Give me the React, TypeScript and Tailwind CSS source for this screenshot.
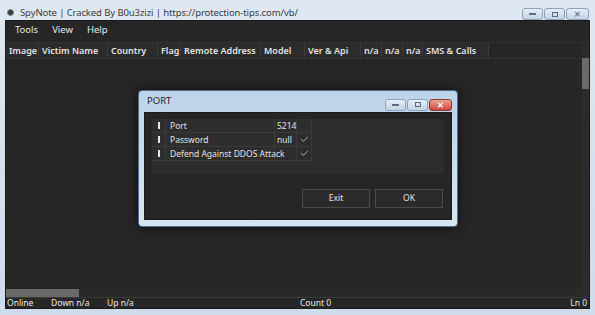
import { Check } from "lucide-react";

const cols = [
  { label: "Image", w: "w-[33px]" },
  { label: "Victim Name", w: "w-[69px]" },
  { label: "Country", w: "w-[50px]" },
  { label: "Flag", w: "w-[23px]" },
  { label: "Remote Address", w: "w-[80px]" },
  { label: "Model", w: "w-[44px]" },
  { label: "Ver & Api", w: "w-[56px]" },
  { label: "n/a", w: "w-[21px]" },
  { label: "n/a", w: "w-[21px]" },
  { label: "n/a", w: "w-[20px]" },
  { label: "SMS & Calls", w: "w-[66px]" },
];

const rows = [
  { name: "Port", value: "5214", checked: false },
  { name: "Password", value: "null", checked: true },
  { name: "Defend Against DDOS Attack", value: "", checked: true },
];

function CaptionButtons({ active }: { active?: boolean }) {
  return (
    <div className="flex gap-[1px]">
      <div className="w-[21px] h-[12px] rounded-[3px] border border-[#8ea3bb] bg-gradient-to-b from-[#e6eef7] to-[#c4d3e3] flex items-center justify-center">
        <div className="w-[7px] h-[2px] bg-[#5b6c80]" />
      </div>
      <div className="w-[21px] h-[12px] rounded-[3px] border border-[#8ea3bb] bg-gradient-to-b from-[#e6eef7] to-[#c4d3e3] flex items-center justify-center">
        <div className="w-[6px] h-[5px] border border-[#5b6c80]" />
      </div>
      <div
        className={`w-[23px] h-[12px] rounded-[3px] border flex items-center justify-center text-[8px] font-bold leading-none ${
          active
            ? "border-[#8c3a2e] bg-gradient-to-b from-[#e8a393] to-[#c8473a] text-white"
            : "border-[#8ea3bb] bg-gradient-to-b from-[#e6eef7] to-[#c4d3e3] text-[#6b7c90]"
        }`}
      >
        ✕
      </div>
    </div>
  );
}

export default function App() {
  return (
    <div
      className="relative w-[595px] h-[315px] overflow-hidden bg-gradient-to-b from-[#dfe8f2] to-[#cddbeb] flex flex-col text-[#e2e2e2] select-none"
      style={{ fontFamily: '"Noto Sans", "Open Sans", sans-serif' }}
    >
      {/* title bar */}
      <div className="h-[20px] flex items-start pt-[6px] pl-[7px] pr-[6px] shrink-0">
        <div className="w-[7px] h-[7px] mt-[3px] rounded-full bg-[#3a3a3a] border border-[#888]" />
        <span className="ml-[6px] text-[9.5px] leading-[13px] text-[#3c3c3c] tracking-[-0.1px]">
          SpyNote | Cracked By B0u3zizi | https://protection-tips.com/vb/
        </span>
        <div className="ml-auto mt-[2px]">
          <CaptionButtons />
        </div>
      </div>

      {/* client */}
      <div className="flex-1 mx-[5px] mb-[6px] bg-[#262626] flex flex-col border border-[#1a1a1a]">
        {/* menu */}
        <div className="h-[21px] flex items-center gap-[14px] pl-[9px] pb-[3px] text-[9.5px] text-[#e6e6e6] shrink-0">
          <span>Tools</span>
          <span>View</span>
          <span>Help</span>
        </div>

        {/* list */}
        <div className="flex-1 flex border-t border-[#303030]">
          <div className="flex-1 flex flex-col">
            <div className="h-[16px] flex border-b border-[#333] shrink-0">
              <div className="flex bg-[#2c2c2c]">
                {cols.map((c, i) => (
                  <div
                    key={i}
                    className={`${c.w} border-r border-[#3b3b3b] pl-[3px] text-[9px] font-semibold leading-[16px] whitespace-nowrap overflow-hidden`}
                  >
                    {c.label}
                  </div>
                ))}
              </div>
            </div>
            <div className="flex-1" />
            <div className="h-[8px] bg-[#2a2a2a] flex">
              <div className="w-[73px] bg-[#6a6a6a]" />
            </div>
          </div>
          <div className="w-[7px] bg-[#2b2b2b] flex flex-col pt-[15px]">
            <div className="h-[31px] bg-[#6a6a6a]" />
          </div>
        </div>

        {/* status */}
        <div className="h-[11px] flex items-center text-[8.5px] leading-none border-t border-[#3a3a3a] px-[1px] shrink-0 text-[#e8e8e8]">
          <span className="w-[44px]">Online</span>
          <span className="w-[56px]">Down n/a</span>
          <span className="w-[193px]">Up n/a</span>
          <span>Count 0</span>
          <span className="ml-auto pr-[1px]">Ln 0</span>
        </div>
      </div>

      {/* PORT dialog */}
      <div className="absolute left-[138px] top-[90px] w-[320px] h-[137px] rounded-[4px] border border-[#4f6f8f] bg-gradient-to-b from-[#bcd3ea] to-[#d8e6f4] shadow-[0_0_10px_rgba(0,0,0,0.7)] flex flex-col px-[5px] pb-[6px]">
        <div className="h-[21px] flex items-center shrink-0">
          <span className="ml-[3px] text-[9.5px] text-[#1e1e1e]">PORT</span>
          <div className="ml-auto mt-[6px]">
            <CaptionButtons active />
          </div>
        </div>
        <div className="flex-1 bg-[#262626] border border-[#1a1a1a] flex flex-col pt-[6px] px-[7px]">
          <div className="h-[55px] bg-[#2d2d2d] flex flex-col">
            {rows.map((r, i) => (
              <div key={i} className="flex h-[14px] text-[8.5px] leading-[14px]">
                <div className="w-[14px] border-r border-b border-[#3a3a3a] flex items-center justify-center">
                  <div className="w-[2px] h-[7px] bg-[#e6e6e6]" />
                </div>
                <div className="w-[109px] border-r border-b border-[#3a3a3a] pl-[4px] whitespace-nowrap">
                  {r.name}
                </div>
                <div className="w-[22px] border-r border-b border-[#3a3a3a] pl-[2px]">{r.value}</div>
                <div className="w-[15px] border-r border-b border-[#3a3a3a] flex items-center justify-center">
                  {r.checked && <Check className="w-[9px] h-[9px] text-[#d8d8d8]" strokeWidth={2} />}
                </div>
              </div>
            ))}
          </div>
          <div className="flex justify-end gap-[5px] mt-[15px] pr-[1px]">
            <button className="w-[68px] h-[19px] bg-[#2a2a2a] border border-[#4a4a4a] text-[8.5px] text-[#e6e6e6]">
              Exit
            </button>
            <button className="w-[68px] h-[19px] bg-[#2a2a2a] border border-[#4a4a4a] text-[8.5px] text-[#e6e6e6]">
              OK
            </button>
          </div>
        </div>
      </div>
    </div>
  );
}
